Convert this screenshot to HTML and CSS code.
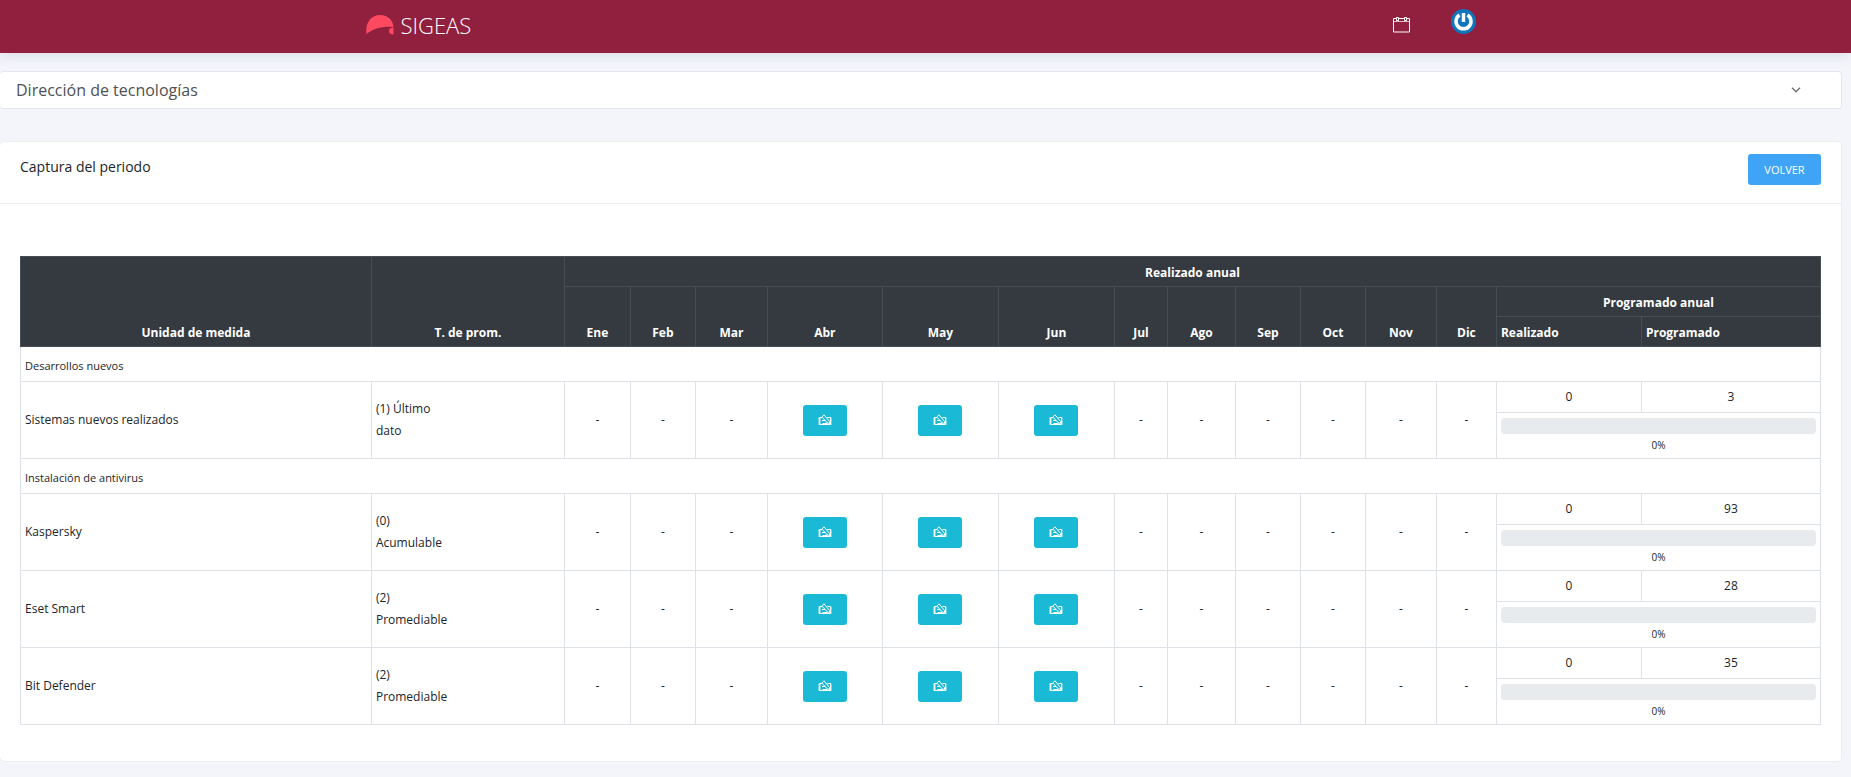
FILE: index.html
```html
<!DOCTYPE html>
<html lang="es">
<head>
<meta charset="utf-8">
<title>SIGEAS</title>
<link rel="stylesheet" href="styles.css">
</head>
<body>
<svg class="sprite" aria-hidden="true">
  <symbol id="capture" viewBox="0 0 14 12">
    <path d="M4 3.500H1.500v7h11v-7H9.500M4.500 9.500h5" fill="none" stroke="currentColor"/>
    <path d="M2.500 4v6M.5 3.500v7h13v-7" fill="none" stroke="currentColor" opacity=".4"/>
    <path d="M3.500 3.500L6 .8l5.500 6.700V9.500l-2-.5L4 3.200M4 6.500h3" fill="none" stroke="currentColor"/>
  </symbol>
</svg>
<header class="navbar">
  <div class="navbar-inner">
    <a class="brand" href="#">
      <svg class="brand-mark" viewBox="0 0 28 20" aria-hidden="true">
        <path d="M0.500 19C-1 8 5 0 14 0c8 0 13 5 13.500 12C17 11 8 13 0.500 19z" fill="#ff4961"/>
        <path d="M27.500 12.500v7c-3 0-4.500-1.500-4.500-3.500s1.500-3.500 4.500-3.500z" fill="#ff4961"/>
      </svg>
      <span class="brand-text">SIGEAS</span>
    </a>
    <nav class="navbar-actions">
      <a class="nav-icon" href="#" aria-label="Calendario">
        <svg width="17" height="16" viewBox="0 0 17 16" fill="none" stroke="#fff" aria-hidden="true">
          <path d="M3.500 1.500H.5v13.500h16V1.500h-3M6 1.500h5"/><path d="M1 4.500h15" stroke-opacity=".7"/><path d="M3.500.5h2v3h-2zM11.500.5h2v3h-2z"/>
        </svg>
      </a>
      <a class="avatar" href="#" aria-label="Perfil">
        <svg width="25" height="25" viewBox="0 0 25 25" fill="none" aria-hidden="true">
          <circle cx="12.500" cy="12.500" r="12.500" fill="#0f75bc"/>
          <path d="M8.500 6A7.500 7.500 0 1 0 16.500 6M12.500 4v9" stroke="#fff" stroke-width="3.500"/>
        </svg>
      </a>
    </nav>
  </div>
</header>
<main class="content">
  <div class="area-picker">
    <select class="area-select" aria-label="Área">
      <option>Dirección de tecnologías</option>
    </select>
    <svg class="area-chevron" viewBox="0 0 10 6" aria-hidden="true"><path d="M1 .8l4 4 4-4" fill="none" stroke="#777" stroke-width="1.500"/></svg>
  </div>
  <section class="card">
    <div class="card-header">
      <h1 class="card-title">Captura del periodo</h1>
      <button class="btn btn-back" type="button">VOLVER</button>
    </div>
    <div class="card-body">
      <table class="report">
        <colgroup>
          <col><col class="c-type"><col class="c-ene"><col class="c-feb"><col class="c-mar"><col class="c-abr"><col class="c-open"><col class="c-open"><col class="c-jul"><col class="c-ago"><col class="c-feb"><col class="c-feb"><col class="c-nov"><col class="c-dic"><col class="c-done"><col class="c-plan">
        </colgroup>
        <thead>
          <tr><th rowspan="3">Unidad de medida</th><th rowspan="3">T. de prom.</th><th colspan="14">Realizado anual</th></tr>
          <tr><th rowspan="2">Ene</th><th rowspan="2">Feb</th><th rowspan="2">Mar</th><th rowspan="2">Abr</th><th rowspan="2">May</th><th rowspan="2">Jun</th><th rowspan="2">Jul</th><th rowspan="2">Ago</th><th rowspan="2">Sep</th><th rowspan="2">Oct</th><th rowspan="2">Nov</th><th rowspan="2">Dic</th><th colspan="2">Programado anual</th></tr>
          <tr><th class="start">Realizado</th><th class="start">Programado</th></tr>
        </thead>
        <tbody>
          <tr class="group"><td colspan="16">Desarrollos nuevos</td></tr>
          <tr>
            <td class="start" rowspan="2">Sistemas nuevos realizados</td>
            <td class="start" rowspan="2"><div class="type">(1) Último dato</div></td>
            <td rowspan="2">-</td><td rowspan="2">-</td><td rowspan="2">-</td>
            <td rowspan="2"><button class="btn btn-capture" type="button" aria-label="Capturar abril"><svg class="capture-icon"><use href="#capture"/></svg></button></td>
            <td rowspan="2"><button class="btn btn-capture" type="button" aria-label="Capturar mayo"><svg class="capture-icon"><use href="#capture"/></svg></button></td>
            <td rowspan="2"><button class="btn btn-capture" type="button" aria-label="Capturar junio"><svg class="capture-icon"><use href="#capture"/></svg></button></td>
            <td rowspan="2">-</td><td rowspan="2">-</td><td rowspan="2">-</td><td rowspan="2">-</td><td rowspan="2">-</td><td rowspan="2">-</td>
            <td>0</td><td>3</td>
          </tr>
          <tr><td class="progress-cell" colspan="2"><div class="progress"></div><div class="percent">0%</div></td></tr>
          <tr class="group"><td colspan="16">Instalación de antivirus</td></tr>
          <tr>
            <td class="start" rowspan="2">Kaspersky</td>
            <td class="start" rowspan="2"><div class="type">(0) Acumulable</div></td>
            <td rowspan="2">-</td><td rowspan="2">-</td><td rowspan="2">-</td>
            <td rowspan="2"><button class="btn btn-capture" type="button" aria-label="Capturar abril"><svg class="capture-icon"><use href="#capture"/></svg></button></td>
            <td rowspan="2"><button class="btn btn-capture" type="button" aria-label="Capturar mayo"><svg class="capture-icon"><use href="#capture"/></svg></button></td>
            <td rowspan="2"><button class="btn btn-capture" type="button" aria-label="Capturar junio"><svg class="capture-icon"><use href="#capture"/></svg></button></td>
            <td rowspan="2">-</td><td rowspan="2">-</td><td rowspan="2">-</td><td rowspan="2">-</td><td rowspan="2">-</td><td rowspan="2">-</td>
            <td>0</td><td>93</td>
          </tr>
          <tr><td class="progress-cell" colspan="2"><div class="progress"></div><div class="percent">0%</div></td></tr>
          <tr>
            <td class="start" rowspan="2">Eset Smart</td>
            <td class="start" rowspan="2"><div class="type">(2) Promediable</div></td>
            <td rowspan="2">-</td><td rowspan="2">-</td><td rowspan="2">-</td>
            <td rowspan="2"><button class="btn btn-capture" type="button" aria-label="Capturar abril"><svg class="capture-icon"><use href="#capture"/></svg></button></td>
            <td rowspan="2"><button class="btn btn-capture" type="button" aria-label="Capturar mayo"><svg class="capture-icon"><use href="#capture"/></svg></button></td>
            <td rowspan="2"><button class="btn btn-capture" type="button" aria-label="Capturar junio"><svg class="capture-icon"><use href="#capture"/></svg></button></td>
            <td rowspan="2">-</td><td rowspan="2">-</td><td rowspan="2">-</td><td rowspan="2">-</td><td rowspan="2">-</td><td rowspan="2">-</td>
            <td>0</td><td>28</td>
          </tr>
          <tr><td class="progress-cell" colspan="2"><div class="progress"></div><div class="percent">0%</div></td></tr>
          <tr>
            <td class="start" rowspan="2">Bit Defender</td>
            <td class="start" rowspan="2"><div class="type">(2) Promediable</div></td>
            <td rowspan="2">-</td><td rowspan="2">-</td><td rowspan="2">-</td>
            <td rowspan="2"><button class="btn btn-capture" type="button" aria-label="Capturar abril"><svg class="capture-icon"><use href="#capture"/></svg></button></td>
            <td rowspan="2"><button class="btn btn-capture" type="button" aria-label="Capturar mayo"><svg class="capture-icon"><use href="#capture"/></svg></button></td>
            <td rowspan="2"><button class="btn btn-capture" type="button" aria-label="Capturar junio"><svg class="capture-icon"><use href="#capture"/></svg></button></td>
            <td rowspan="2">-</td><td rowspan="2">-</td><td rowspan="2">-</td><td rowspan="2">-</td><td rowspan="2">-</td><td rowspan="2">-</td>
            <td>0</td><td>35</td>
          </tr>
          <tr><td class="progress-cell" colspan="2"><div class="progress"></div><div class="percent">0%</div></td></tr>
        </tbody>
      </table>
    </div>
  </section>
</main>
</body>
</html>
```

FILE: styles.css
```css
* {
  box-sizing: border-box;
}

body {
  margin: 0;
  background: #f4f5fa;
  color: #212529;
  font-family: "Open Sans", "Noto Sans", sans-serif;
  font-size: 12px;
  line-height: 22px;
}

.sprite {
  position: absolute;
  width: 0;
  height: 0;
}

.navbar {
  background: #91203e;
  box-shadow: 0 2px 12px rgba(62, 87, 111, 0.16);
}

.navbar-inner {
  display: flex;
  align-items: center;
  justify-content: space-between;
  max-width: 1140px;
  height: 53px;
  margin: 0 auto;
  padding: 0 20px 4px 10px;
}

.brand {
  display: flex;
  align-items: center;
  gap: 7px;
  color: #fff;
  text-decoration: none;
}

.brand-mark {
  width: 28px;
  height: 20px;
}

.brand-text {
  font-size: 22px;
  font-weight: 300;
}

.navbar-actions {
  display: flex;
  align-items: center;
  gap: 41px;
}

.nav-icon,
.avatar {
  display: flex;
}

.avatar {
  padding-bottom: 6px;
}

.content {
  display: flex;
  flex-direction: column;
  gap: 32px;
  padding: 18px 9px 12px 0;
}

.area-picker {
  position: relative;
}

.area-select {
  display: block;
  width: 100%;
  height: 38px;
  padding: 0 40px 0 16px;
  border: 1px solid #e4e7ed;
  border-left: 0;
  border-radius: 4px;
  background: #fff;
  color: #4e5154;
  font-family: inherit;
  font-size: 16px;
  appearance: none;
}

.area-chevron {
  position: absolute;
  top: 16px;
  right: 41px;
  width: 10px;
  height: 6px;
  pointer-events: none;
}

.card {
  border: 1px solid #ebedf0;
  border-left: 0;
  border-radius: 5px;
  background: #fff;
}

.card-header {
  display: flex;
  align-items: flex-start;
  justify-content: space-between;
  padding: 12px 20px 18px;
  border-bottom: 1px solid #ebedf0;
}

.card-title {
  margin: 0;
  padding-top: 2px;
  font-size: 14px;
  font-weight: 400;
}

.card-body {
  padding: 52px 20px 36px;
}

.btn {
  display: inline-flex;
  align-items: center;
  justify-content: center;
  height: 31px;
  padding: 0 15px;
  border: 0;
  border-radius: 3px;
  color: #fff;
  font-family: inherit;
  font-size: 11px;
  vertical-align: middle;
}

.btn-back {
  min-width: 73px;
  background: #3fa4f5;
}

.btn-capture {
  background: #1abad7;
}

.capture-icon {
  width: 14px;
  height: 12px;
}

.report {
  width: 100%;
  border-collapse: collapse;
  table-layout: fixed;
}

.c-type { width: 193px; }
.c-ene { width: 66px; }
.c-feb { width: 65px; }
.c-mar { width: 72px; }
.c-abr { width: 115px; }
.c-open { width: 116px; }
.c-jul { width: 53px; }
.c-ago { width: 68px; }
.c-nov { width: 71px; }
.c-dic { width: 60px; }
.c-done { width: 145px; }
.c-plan { width: 179px; }

.report th,
.report td {
  padding: 4px;
  border: 1px solid #dee2e6;
  text-align: center;
  vertical-align: middle;
}

.report th {
  padding: 5px 4px 3px;
  border-color: #454d55;
  background: #343a40;
  color: #fff;
  font-weight: 700;
  line-height: 21px;
  vertical-align: bottom;
}

.report .start,
.report .group td {
  text-align: left;
}

.report .group td {
  height: 35px;
  padding: 8px 4px 4px;
  font-size: 11px;
}

.type {
  max-width: 76px;
}

.report .progress-cell {
  height: 46px;
}

.progress {
  height: 16px;
  border-radius: 4px;
  background: #e7ebee;
}

.percent {
  padding-top: 2px;
  font-size: 10px;
  line-height: 18px;
}
```
